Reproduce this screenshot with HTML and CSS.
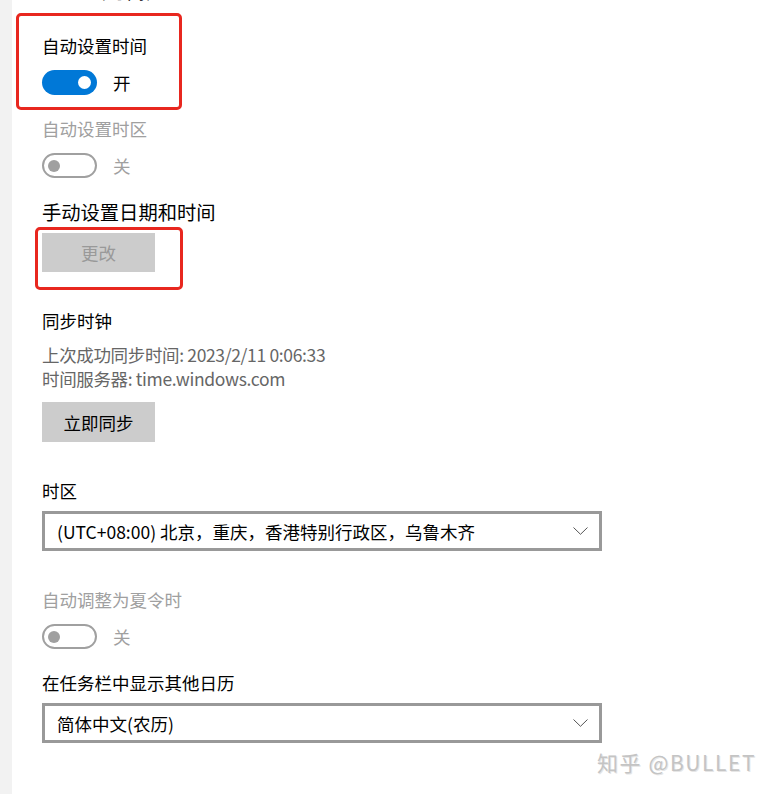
FILE: index.html
```html
<!DOCTYPE html>
<html lang="zh-CN">
<head>
<meta charset="utf-8">
<title>日期和时间</title>
<link rel="stylesheet" href="styles.css">
</head>
<body>
<div class="page">
  <div class="strip"></div>
  <main class="content">
    <div class="cut">（时间）</div>

    <div class="label l1">自动设置时间</div>
    <div class="toggle-row">
      <span class="toggle on"><span class="knob"></span></span>
      <span class="state">开</span>
    </div>

    <div class="label disabled l2">自动设置时区</div>
    <div class="toggle-row">
      <span class="toggle off"><span class="knob"></span></span>
      <span class="state disabled">关</span>
    </div>

    <div class="label heading l2">手动设置日期和时间</div>
    <div class="btn disabled-btn b1">更改</div>

    <div class="label l3">同步时钟</div>
    <div class="info i1">上次成功同步时间: 2023/2/11 0:06:33</div>
    <div class="info">时间服务器: time.windows.com</div>
    <div class="btn b2">立即同步</div>

    <div class="label l3">时区</div>
    <div class="select s1">
      <span>(UTC+08:00) 北京，重庆，香港特别行政区，乌鲁木齐</span>
      <svg class="chev" width="15" height="8" viewBox="0 0 15 8"><path d="M0.5 0.5 L7.5 7.3 L14.5 0.5" fill="none" stroke="#555" stroke-width="1"/></svg>
    </div>

    <div class="label disabled l3">自动调整为夏令时</div>
    <div class="toggle-row">
      <span class="toggle off"><span class="knob"></span></span>
      <span class="state disabled">关</span>
    </div>

    <div class="label l2">在任务栏中显示其他日历</div>
    <div class="select s2">
      <span>简体中文(农历)</span>
      <svg class="chev" width="15" height="8" viewBox="0 0 15 8"><path d="M0.5 0.5 L7.5 7.3 L14.5 0.5" fill="none" stroke="#555" stroke-width="1"/></svg>
    </div>
  </main>
</div>

<div class="mark mark1"></div>
<div class="mark mark2"></div>
<div class="watermark">知乎 @BULLET</div>
</body>
</html>
```

FILE: styles.css
```css
* { box-sizing: border-box; }
html, body {
  margin: 0;
  padding: 0;
  background: #fff;
  overflow: hidden;
}
body {
  width: 775px;
  height: 794px;
  position: relative;
  font-family: "Noto Sans CJK SC", "Noto Sans", sans-serif;
  font-size: 17.5px;
  color: #000;
}
.page {
  display: flex;
  height: 794px;
}
.strip {
  width: 12px;
  flex: none;
  background: #f2f2f2;
}
.content {
  flex: 1;
  padding-left: 30px;
  display: flex;
  flex-direction: column;
  align-items: flex-start;
}
.cut {
  height: 24px;
  line-height: 24px;
  margin-top: -20px;
  margin-left: 46px;
  color: #333;
  letter-spacing: 2px;
}
.label {
  height: 24px;
  line-height: 24px;
  white-space: nowrap;
}
.l1 { margin-top: 30px; }
.l2 { margin-top: 22px; }
.l3 { margin-top: 37px; }
.heading { font-size: 19.3px; }
.disabled { color: #a0a0a0; }

.toggle-row {
  margin-top: 12px;
  height: 25px;
  display: flex;
  align-items: center;
  gap: 16px;
}
.toggle {
  width: 55px;
  height: 25px;
  border-radius: 13px;
  display: flex;
  align-items: center;
  flex: none;
}
.toggle.on {
  background: #0078d7;
  justify-content: flex-end;
  padding-right: 6px;
}
.toggle.on .knob {
  width: 13px;
  height: 13px;
  border-radius: 50%;
  background: #fff;
}
.toggle.off {
  border: 2.5px solid #a0a0a0;
  padding-left: 4px;
}
.toggle.off .knob {
  width: 12px;
  height: 12px;
  border-radius: 50%;
  background: #a0a0a0;
}
.state {
  line-height: 25px;
}

.btn {
  width: 113px;
  height: 40px;
  background: #cccccc;
  display: flex;
  align-items: center;
  justify-content: center;
  margin-top: 9px;
}
.b1 { height: 39px; }
.disabled-btn { color: #999; }
.b2 { margin-top: 11px; }

.info {
  height: 24px;
  line-height: 24px;
  color: #666;
  white-space: nowrap;
  letter-spacing: -0.35px;
}
.i1 { margin-top: 10px; }

.select {
  width: 560px;
  height: 40px;
  border: 3px solid #999;
  margin-top: 8px;
  display: flex;
  align-items: center;
  justify-content: space-between;
  padding: 0 11px 0 12px;
  white-space: nowrap;
}
.chev { flex: none; }

.mark {
  position: absolute;
  border: 3.5px solid #e8271f;
  border-radius: 5px;
}
.mark1 { left: 16px; top: 13px; width: 166px; height: 97px; }
.mark2 { left: 35px; top: 227px; width: 148px; height: 63px; }

.watermark {
  position: absolute;
  left: 597px;
  top: 747px;
  font-size: 21px;
  line-height: 30px;
  color: #c4c4c4;
  letter-spacing: 1.6px;
  text-shadow: 1px 1px 0 #e6e6e6;
  white-space: nowrap;
}
```
